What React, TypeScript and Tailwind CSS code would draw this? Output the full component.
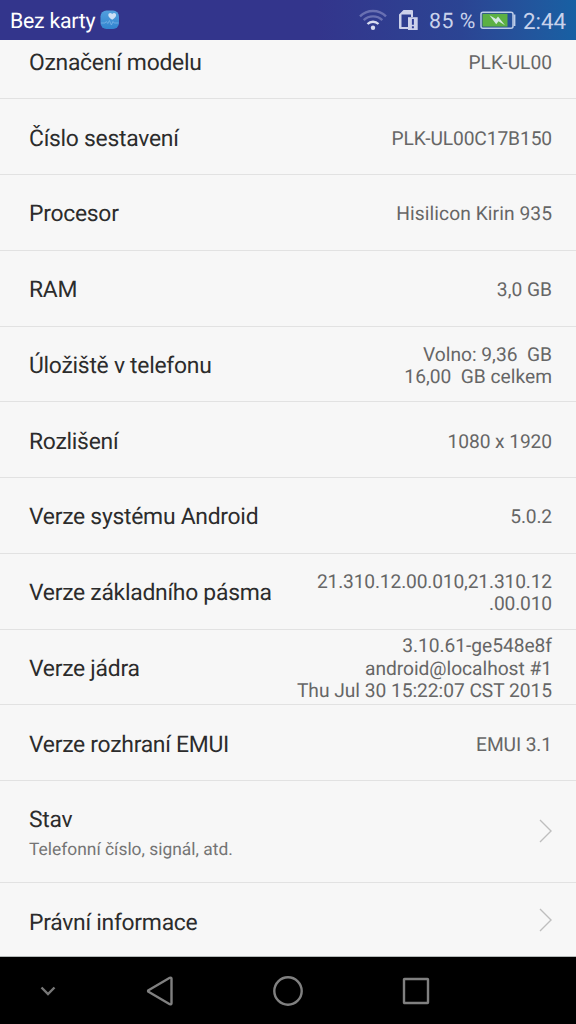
import React from 'react';

type Row = { label: string; value: string[]; tracking?: string };

const rows: Row[] = [
  { label: 'Označení modelu', value: ['PLK-UL00'] },
  { label: 'Číslo sestavení', value: ['PLK-UL00C17B150'], tracking: 'tracking-[-0.1px]' },
  { label: 'Procesor', value: ['Hisilicon Kirin 935'], tracking: 'tracking-[0.08px]' },
  { label: 'RAM', value: ['3,0 GB'] },
  { label: 'Úložiště v telefonu', value: ['Volno: 9,36\u00a0 GB', '16,00\u00a0 GB celkem'] },
  { label: 'Rozlišení', value: ['1080 x 1920'], tracking: 'tracking-[-0.08px]' },
  { label: 'Verze systému Android', value: ['5.0.2'], tracking: 'tracking-[-0.15px]' },
  { label: 'Verze základního pásma', value: ['21.310.12.00.010,21.310.12', '.00.010'], tracking: 'tracking-[-0.15px]' },
  { label: 'Verze jádra', value: ['3.10.61-ge548e8f', 'android@localhost #1', 'Thu Jul 30 15:22:07 CST 2015'], tracking: 'tracking-[-0.03px]' },
  { label: 'Verze rozhraní EMUI', value: ['EMUI 3.1'], tracking: 'tracking-[-0.1px]' },
];

function HealthIcon() {
  return (
    <svg width="20" height="20" viewBox="0 0 20 20" className="shrink-0">
      <defs>
        <linearGradient id="health" x1="0" y1="0" x2="0" y2="1">
          <stop offset="0" stopColor="#529fdd" />
          <stop offset="1" stopColor="#3284cf" />
        </linearGradient>
      </defs>
      <rect x="0.500" y="0.500" width="18.500" height="18.500" rx="6" fill="url(#health)" />
      <path d="M12.200 9.800C9.400 8 8.300 6.600 8.300 5c0-2 2.500-2.700 3.900-1 1.400-1.700 3.900-1 3.900 1 0 1.600-1.100 3-3.900 4.800z" fill="#cddff5" />
      <path d="M1 13h4l1.300-1.500 1.500 2 1.600-3 2 4.500 1.600-3.500 1.200 1.500h4.300" fill="none" stroke="#79b2e6" strokeWidth="0.800" />
    </svg>
  );
}

function WifiIcon() {
  return (
    <svg width="28" height="22" viewBox="0 0 28 22" fill="none" strokeWidth="2.400" className="shrink-0">
      <path d="M1 7.300a18.500 18.500 0 0 1 26 0" stroke="#6970b2" />
      <path d="M4.700 11.200a13.200 13.200 0 0 1 18.600 0" stroke="#6970b2" />
      <path d="M8.500 15a8 8 0 0 1 11 0" stroke="#d9dcf0" />
      <circle cx="14" cy="18.800" r="2.200" fill="#d9dcf0" />
    </svg>
  );
}

function SimIcon() {
  return (
    <svg width="20" height="21" viewBox="0 0 20 21" className="shrink-0">
      <path d="M0 4.500 4.500 0h8.500a1 1 0 0 1 1 1V7h-2V4.500H2.500V17H9v2H1a1 1 0 0 1-1-1z" fill="#ccd1ea" />
      <rect x="9" y="7.200" width="9.700" height="12.800" fill="#ccd1ea" />
      <path d="M13.900 9v5.800M13.900 16.300v2" stroke="#303f98" strokeWidth="2" />
    </svg>
  );
}

function BatteryIcon() {
  return (
    <svg width="37" height="19" viewBox="0 0 37 19" className="shrink-0">
      <rect x="1" y="1.200" width="32" height="16" rx="2" fill="none" stroke="#bccce8" strokeWidth="1.500" />
      <path d="M33.500 4.500h1v9.500h-1" fill="none" stroke="#bccce8" strokeWidth="1.800" />
      <rect x="2.500" y="2.800" width="25" height="12.800" fill="#5cb043" />
      <path d="M9.500 4.200 16 8l2-2.500 7 8.800-6.500-4.100-2.300 3z" fill="#d5e8e4" />
    </svg>
  );
}

function Chevron() {
  return (
    <svg width="14" height="24" viewBox="0 0 14 24" className="-mt-[2px] shrink-0">
      <path d="M2 1 13 12 2 23" fill="none" stroke="#bebebe" strokeWidth="1.400" />
    </svg>
  );
}

export default function App() {
  return (
    <div className="flex h-[1024px] w-[576px] flex-col overflow-hidden bg-[#f7f7f7] font-[Roboto,sans-serif] text-[#2c2c2c] [text-rendering:geometricPrecision]">
      <header className="flex h-10 shrink-0 items-center bg-linear-to-r from-[#33358c] from-55% via-[#2b4493] via-80% to-[#1760a3] pl-[10px] text-white">
        <span className="w-[90px] pt-[4px] text-[21.300px] leading-[36px] tracking-[-0.250px] whitespace-pre">Bez karty</span>
        <HealthIcon />
        <div className="ml-auto flex items-center text-[#c9d2eb]">
          <WifiIcon />
          <span className="ml-3 flex"><SimIcon /></span>
          <span className="ml-[10px] w-[51px] pt-[4px] text-[21.300px] leading-[36px] tracking-[0.500px] whitespace-nowrap">85 %</span>
          <span className="flex"><BatteryIcon /></span>
          <span className="ml-[6px] w-[53px] pt-[4px] text-[22.400px] leading-[36px]">2:44</span>
        </div>
      </header>

      <main className="h-[916px] shrink-0 overflow-hidden">
        <div className="-mt-[16.400px]">
          {rows.map((row) => (
            <div key={row.label} className="flex h-[75.750px] items-center justify-between border-b border-[#e2e2e2] pt-[4px] pl-[29px] pr-6">
              <span className="text-[22.900px] leading-7 tracking-[-0.270px] whitespace-nowrap">{row.label}</span>
              <span className={`flex flex-col text-right text-[19.200px] leading-[22.400px] whitespace-nowrap text-[#666] ${row.tracking ?? ''}`}>
                {row.value.map((line) => (
                  <span key={line}>{line}</span>
                ))}
              </span>
            </div>
          ))}
          <div className="flex h-[102px] items-center justify-between border-b border-[#e2e2e2] pt-px pl-[29px] pr-6">
            <div className="flex flex-col pt-[2px]">
              <span className="text-[22.900px] leading-[34px] tracking-[-0.270px]">Stav</span>
              <span className="text-[17.400px] leading-[26px] text-[#747474]">Telefonní číslo, signál, atd.</span>
            </div>
            <Chevron />
          </div>
          <div className="flex h-[76px] items-center justify-between pl-[29px] pr-6">
            <span className="pt-[4px] text-[22.900px] leading-7 tracking-[-0.270px]">Právní informace</span>
            <Chevron />
          </div>
        </div>
      </main>

      <nav className="flex h-[68px] shrink-0 items-center border-t border-[#b5bab9] bg-black">
        <div className="flex w-24 justify-center">
          <svg width="16" height="10" viewBox="0 0 16 10" fill="none" stroke="#777" strokeWidth="2.400">
            <path d="M1.500 1.500 8 8l6.500-6.500" />
          </svg>
        </div>
        <div className="flex w-32 justify-center">
          <svg width="28" height="30" viewBox="0 0 28 30" fill="none" stroke="#808080" strokeWidth="2.400" strokeLinejoin="round">
            <path d="M2.500 14.200Q1.600 15 2.500 15.800L23.800 28.200Q25.500 28.800 25.500 27.300V2.700Q25.500 1.200 23.800 1.800Z" />
          </svg>
        </div>
        <div className="flex w-32 justify-center">
          <svg width="32" height="32" viewBox="0 0 32 32" fill="none" stroke="#808080" strokeWidth="2.400">
            <circle cx="16" cy="16" r="13.700" />
          </svg>
        </div>
        <div className="flex w-32 justify-center">
          <svg width="28" height="28" viewBox="0 0 28 28" fill="none" stroke="#808080" strokeWidth="2.400" strokeLinejoin="round">
            <rect x="2" y="2" width="24" height="24" rx="0.500" />
          </svg>
        </div>
      </nav>
    </div>
  );
}
